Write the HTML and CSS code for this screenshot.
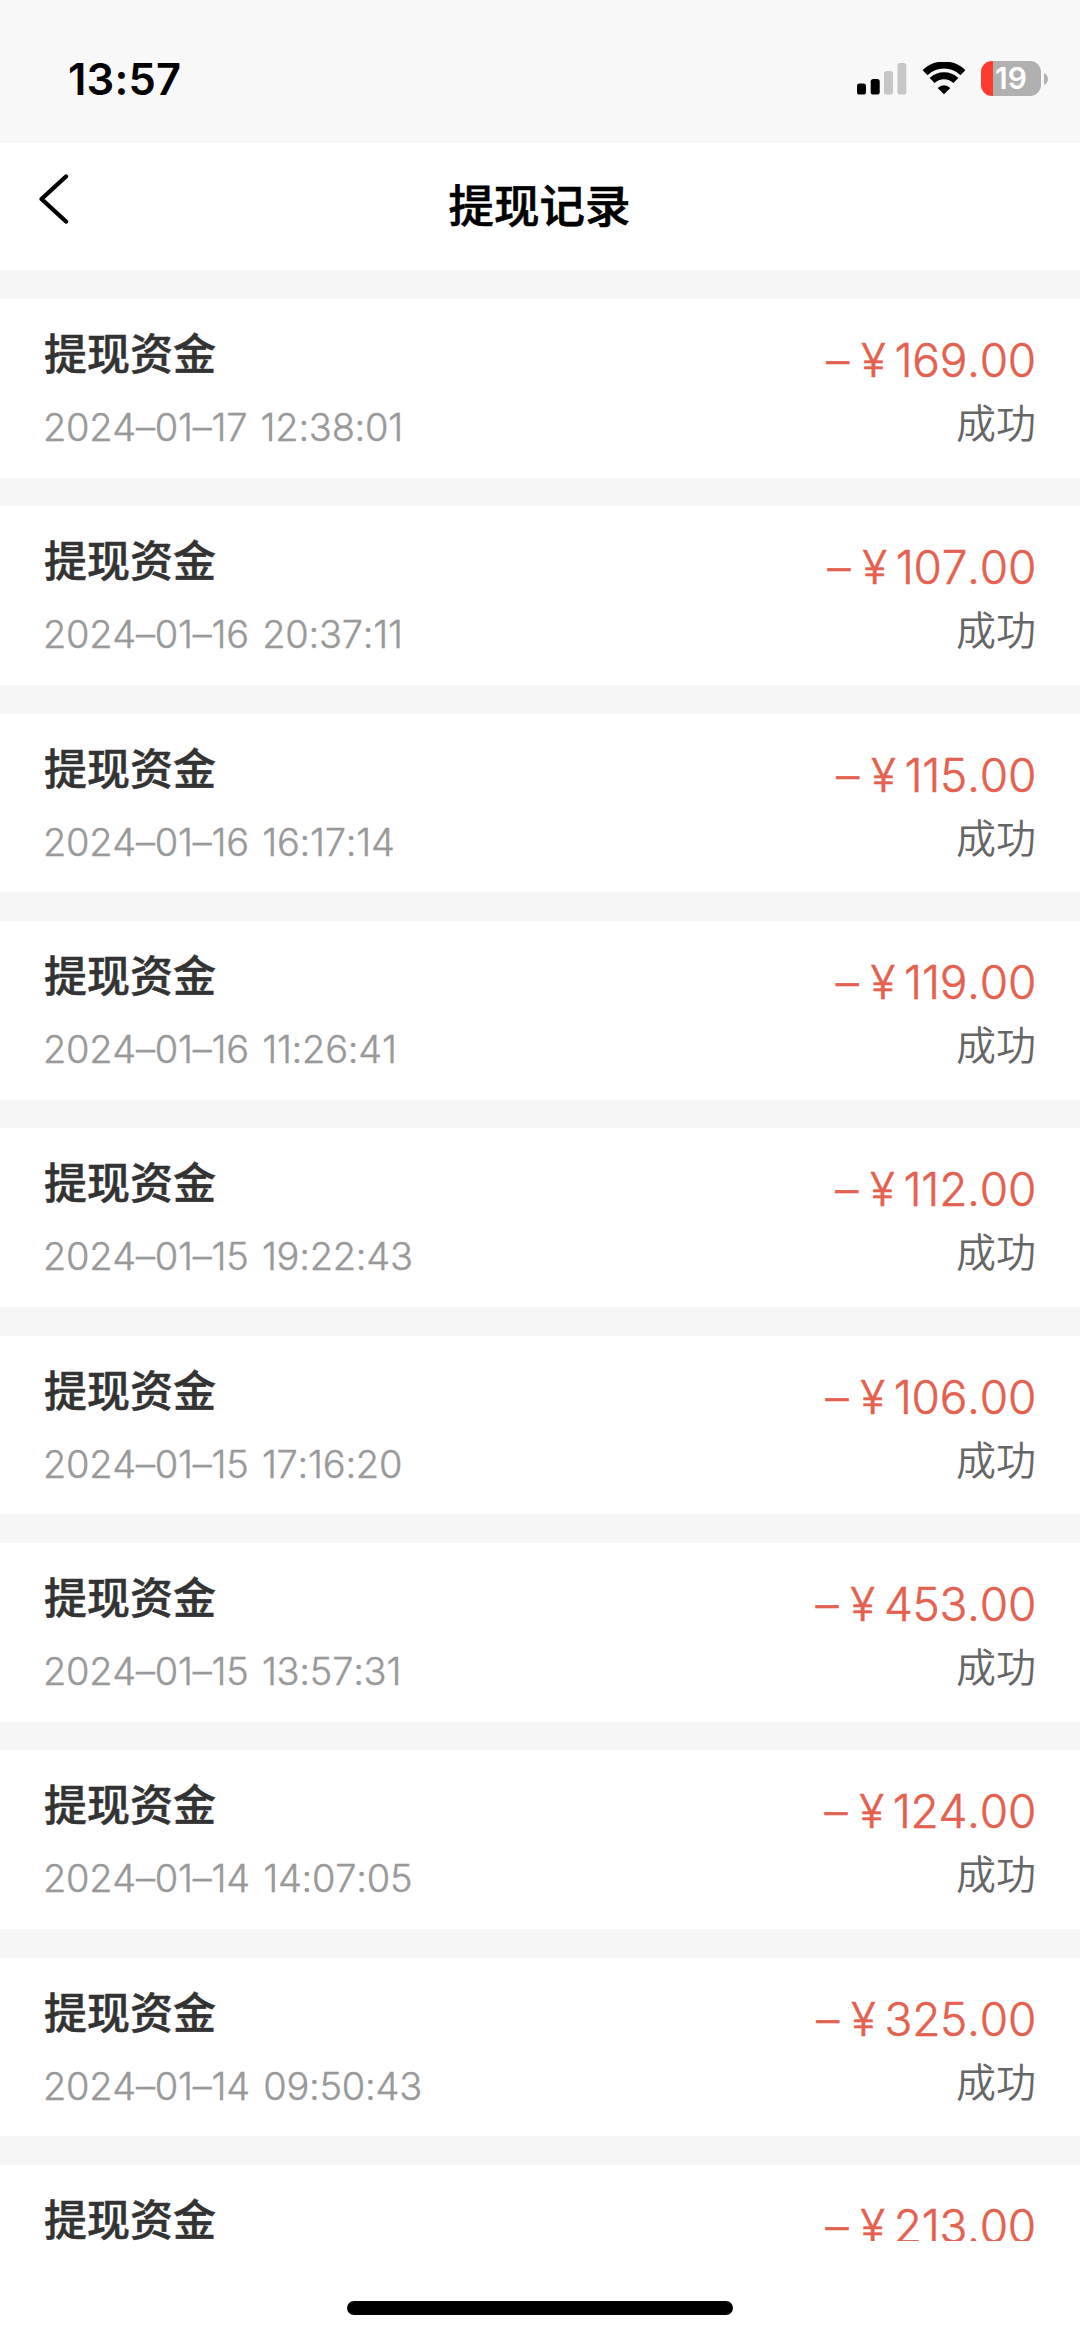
FILE: index.html
```html
<!DOCTYPE html>
<html lang="zh-CN">
<head>
<meta charset="utf-8">
<title>提现记录</title>
<link rel="stylesheet" href="styles.css">
</head>
<body>
<div class="screen">
  <div class="status-bar">
    <span class="clock">13:57</span>
    <div class="indicators">
      <svg class="signal" width="50" height="32" viewBox="0 0 50 32">
        <rect x="0" y="20.5" width="9" height="11" rx="2.6"/>
        <rect x="13.7" y="16" width="9" height="15.5" rx="2.6"/>
        <rect class="dim" x="27" y="8" width="9" height="23.5" rx="2.6"/>
        <rect class="dim" x="40.5" y="0" width="8.8" height="31.5" rx="2.6"/>
      </svg>
      <svg class="wifi" width="44" height="33" viewBox="0 0 44 33">
        <path d="M3 10.6A27.5 27.5 0 0 1 41 10.6" />
        <path d="M10.1 18.6A17 17 0 0 1 33.9 18.6" />
        <path class="dot" d="M22 32.3L15.6 26Q22 20.6 28.4 26Z"/>
      </svg>
      <div class="battery"><span class="battery-level">19</span></div>
      <svg class="battery-cap" width="4" height="12" viewBox="0 0 4 12"><path d="M0 0Q4 2 4 6T0 12Z"/></svg>
    </div>
  </div>
  <header class="nav">
    <svg class="back" width="32" height="52" viewBox="0 0 32 52"><path d="M28 3.5L3.5 26L28 48.5"/></svg>
    <h1 class="title">提现记录</h1>
  </header>
  <main class="list">
    <div class="row"><div class="info"><div class="name">提现资金</div><div class="date">2024–01–17 12:38:01</div></div><div class="result"><div class="amount"><span class="minus">–</span><span class="yen">¥</span>169.00</div><div class="state">成功</div></div></div>
    <div class="row"><div class="info"><div class="name">提现资金</div><div class="date">2024–01–16 20:37:11</div></div><div class="result"><div class="amount"><span class="minus">–</span><span class="yen">¥</span>107.00</div><div class="state">成功</div></div></div>
    <div class="row"><div class="info"><div class="name">提现资金</div><div class="date">2024–01–16 16:17:14</div></div><div class="result"><div class="amount"><span class="minus">–</span><span class="yen">¥</span>115.00</div><div class="state">成功</div></div></div>
    <div class="row"><div class="info"><div class="name">提现资金</div><div class="date">2024–01–16 11:26:41</div></div><div class="result"><div class="amount"><span class="minus">–</span><span class="yen">¥</span>119.00</div><div class="state">成功</div></div></div>
    <div class="row"><div class="info"><div class="name">提现资金</div><div class="date">2024–01–15 19:22:43</div></div><div class="result"><div class="amount"><span class="minus">–</span><span class="yen">¥</span>112.00</div><div class="state">成功</div></div></div>
    <div class="row"><div class="info"><div class="name">提现资金</div><div class="date">2024–01–15 17:16:20</div></div><div class="result"><div class="amount"><span class="minus">–</span><span class="yen">¥</span>106.00</div><div class="state">成功</div></div></div>
    <div class="row"><div class="info"><div class="name">提现资金</div><div class="date">2024–01–15 13:57:31</div></div><div class="result"><div class="amount"><span class="minus">–</span><span class="yen">¥</span>453.00</div><div class="state">成功</div></div></div>
    <div class="row"><div class="info"><div class="name">提现资金</div><div class="date">2024–01–14 14:07:05</div></div><div class="result"><div class="amount"><span class="minus">–</span><span class="yen">¥</span>124.00</div><div class="state">成功</div></div></div>
    <div class="row"><div class="info"><div class="name">提现资金</div><div class="date">2024–01–14 09:50:43</div></div><div class="result"><div class="amount"><span class="minus">–</span><span class="yen">¥</span>325.00</div><div class="state">成功</div></div></div>
    <div class="row"><div class="info"><div class="name">提现资金</div></div><div class="result"><div class="amount"><span class="minus">–</span><span class="yen">¥</span>213.00</div></div></div>
  </main>
  <footer class="home"><div class="home-bar"></div></footer>
</div>
</body>
</html>
```

FILE: styles.css
```css
* { box-sizing: border-box; }
body {
  margin: 0;
  background: #fff;
  font-family: Inter, "Noto Sans CJK SC", sans-serif;
}
.screen {
  width: 1080px;
  height: 2339px;
  display: flex;
  flex-direction: column;
  overflow: hidden;
}
.status-bar {
  height: 143px;
  flex: none;
  display: flex;
  justify-content: space-between;
  align-items: flex-start;
  padding: 54px 32px 0 68px;
  background: #f8f8f8;
}
.clock {
  font-size: 43.5px;
  font-weight: 600;
  line-height: 50px;
  letter-spacing: 0.2px;
  color: #000;
}
.indicators { display: flex; align-items: center; padding-top: 7px; }
.signal { margin: 1px 15px 0 0; }
.signal .dim { fill: #c6c6c6; }
.wifi { margin-right: 15px; }
.wifi path { fill: none; stroke: #000; stroke-width: 7; }
.wifi .dot { fill: #000; stroke: none; }
.battery {
  width: 60px;
  height: 35px;
  border-radius: 11px;
  background: linear-gradient(90deg, #ff3b30 12px, #b0b0b0 12px);
  text-align: center;
}
.battery-level { font-size: 30px; font-weight: 600; line-height: 35px; color: #fff; }
.battery-cap { margin-left: 3px; fill: #b0b0b0; }
.nav {
  height: 127px;
  flex: none;
  display: grid;
  grid-template-columns: 1fr auto 1fr;
  align-items: start;
  padding: 0 39px 0 38px;
}
.back { margin: 30px 0 0; fill: none; stroke: #000; stroke-width: 4.4; stroke-linecap: round; stroke-linejoin: round; }
.title {
  margin: 33px 0 0;
  font-size: 45.5px;
  font-weight: 500;
  line-height: 62px;
  color: #000;
  -webkit-text-stroke: 0.6px #000;
}
.list {
  flex: none;
  height: 1971px;
  padding-top: 29px;
  display: flex;
  flex-direction: column;
  gap: 28.8px;
  background: #f6f6f6;
  overflow: hidden;
}
.row {
  flex: none;
  height: 178.56px;
  display: flex;
  justify-content: space-between;
  padding: 0 44px;
  background: #fff;
}
.name {
  margin-top: 25px;
  font-size: 43px;
  font-weight: 500;
  line-height: 60px;
  color: #333;
  -webkit-text-stroke: 0.5px #333;
}
.date {
  margin: 18px 0 0 -1px;
  font-size: 38px;
  font-weight: 300;
  line-height: 50px;
  letter-spacing: -0.25px;
  word-spacing: 3px;
  font-kerning: none;
  color: #999;
  -webkit-text-stroke: 0.4px #999;
  white-space: nowrap;
}
.result { text-align: right; }
.amount {
  margin-top: 36px;
  font-size: 46px;
  font-weight: 300;
  line-height: 50px;
  letter-spacing: -0.3px;
  font-kerning: none;
  color: #e4604f;
  -webkit-text-stroke: 0.5px #e4604f;
}
.minus { margin-right: 12px; }
.yen { margin-right: 9px; }
.state { margin-top: 11px; font-size: 40px; font-weight: 350; line-height: 56px; color: #666; }
.home { flex: 1; display: flex; justify-content: center; padding-top: 60px; }
.home-bar { width: 386px; height: 14px; border-radius: 7px; background: #000; }
```
